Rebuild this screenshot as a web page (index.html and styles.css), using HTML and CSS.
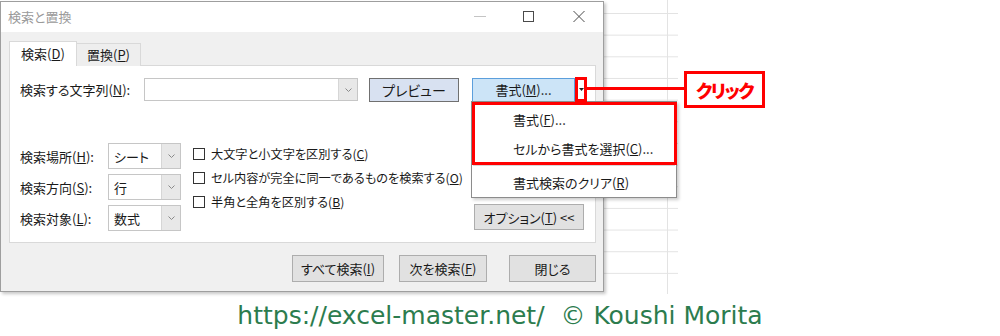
FILE: index.html
```html
<!DOCTYPE html>
<html lang="ja">
<head>
    <meta charset="UTF-8">
    <title>検索と置換</title>
    <link rel="stylesheet" href="styles.css">
</head>
<body>
    <div class="sheet">
        <!-- ダイアログ本体 -->
        <div class="dialog">
            <div class="titlebar">
                <span class="title">検索と置換</span>
                <div class="win-controls">
                    <svg class="win-min" width="12" height="11" viewBox="0 0 12 11"><line x1="0" y1="5.5" x2="12" y2="5.5" stroke="#c4c4c4" stroke-width="1"/></svg>
                    <svg class="win-max" width="12" height="11" viewBox="0 0 12 11"><rect x="0.5" y="0.5" width="10" height="10" fill="none" stroke="#4a4a4a" stroke-width="1"/></svg>
                    <svg class="win-close" width="12" height="11" viewBox="0 0 12 11"><path d="M0.5 0 L11.5 11 M11.5 0 L0.5 11" stroke="#4a4a4a" stroke-width="1"/></svg>
                </div>
            </div>
            <div class="dialog-body">
                <div class="tabs">
                    <div class="tab active">検索(<u>D</u>)</div>
                    <div class="tab">置換(<u>P</u>)</div>
                </div>
                <div class="panel">
                    <div class="find-row">
                        <label class="find-label">検索する文字列(<u>N</u>):</label>
                        <div class="combo find-combo">
                            <span class="combo-text"></span>
                            <span class="combo-arrow"><svg width="7" height="4" viewBox="0 0 7 4"><polyline points="0.5,0.5 3.5,3.5 6.5,0.5" fill="none" stroke="#8a8a8a" stroke-width="1"/></svg></span>
                        </div>
                        <button class="btn btn-preview">プレビュー</button>
                        <div class="split">
                            <button class="btn btn-format">書式(<u>M</u>)...</button>
                            <span class="split-arrow"><svg width="5" height="3" viewBox="0 0 5 3"><polygon points="0,0 5,0 2.5,3" fill="#222"/></svg></span>
                        </div>
                    </div>
                    <div class="options">
                        <div class="selects">
                            <label>検索場所(<u>H</u>):</label>
                            <div class="combo select">
                                <span class="combo-text">シート</span>
                                <span class="combo-arrow"><svg width="7" height="4" viewBox="0 0 7 4"><polyline points="0.5,0.5 3.5,3.5 6.5,0.5" fill="none" stroke="#8a8a8a" stroke-width="1"/></svg></span>
                            </div>
                            <label>検索方向(<u>S</u>):</label>
                            <div class="combo select">
                                <span class="combo-text">行</span>
                                <span class="combo-arrow"><svg width="7" height="4" viewBox="0 0 7 4"><polyline points="0.5,0.5 3.5,3.5 6.5,0.5" fill="none" stroke="#8a8a8a" stroke-width="1"/></svg></span>
                            </div>
                            <label>検索対象(<u>L</u>):</label>
                            <div class="combo select">
                                <span class="combo-text">数式</span>
                                <span class="combo-arrow"><svg width="7" height="4" viewBox="0 0 7 4"><polyline points="0.5,0.5 3.5,3.5 6.5,0.5" fill="none" stroke="#8a8a8a" stroke-width="1"/></svg></span>
                            </div>
                        </div>
                        <div class="checks">
                            <div class="check"><span class="box"></span>大文字と小文字を区別する(<u>C</u>)</div>
                            <div class="check"><span class="box"></span>セル内容が完全に同一であるものを検索する(<u>O</u>)</div>
                            <div class="check"><span class="box"></span>半角と全角を区別する(<u>B</u>)</div>
                        </div>
                        <div class="opt-col">
                            <button class="btn btn-options">オプション(<u>T</u>) &lt;&lt;</button>
                        </div>
                    </div>
                </div>
                <div class="actions">
                    <button class="btn btn-all">すべて検索(<u>I</u>)</button>
                    <button class="btn btn-next">次を検索(<u>F</u>)</button>
                    <button class="btn btn-close">閉じる</button>
                </div>
            </div>
        </div>

        <!-- 書式ボタンのドロップダウン -->
        <div class="menu">
            <div class="menu-item">書式(<u>F</u>)...</div>
            <div class="menu-item">セルから書式を選択(<u>C</u>)...</div>
            <div class="menu-sep"></div>
            <div class="menu-item">書式検索のクリア(<u>R</u>)</div>
        </div>

        <!-- 注釈 -->
        <div class="mark mark-arrow"></div>
        <div class="mark-line"></div>
        <div class="mark mark-menu"></div>
        <div class="callout">クリック</div>
    </div>
    <div class="credit">https://excel-master.net/&nbsp; © Koushi Morita</div>
</body>
</html>
```

FILE: styles.css
```css
/* 検索と置換ダイアログ */

* {
    box-sizing: border-box;
    margin: 0;
    padding: 0;
}

body {
    width: 1000px;
    height: 336px;
    overflow: hidden;
    background: #fff;
    font-family: "Noto Sans CJK JP", sans-serif;
    font-size: 13px;
    color: #1a1a1a;
    font-feature-settings: "palt";
}

u {
    text-underline-offset: 1px;
}

/* 背景のワークシート */
.sheet {
    position: relative;
    width: 678px;
    height: 294px;
    padding-top: 1px;
    background-image:
        linear-gradient(to right, transparent 667px, #e3e3e3 667px, #e3e3e3 668px, transparent 668px),
        linear-gradient(to bottom, #e3e3e3 1px, transparent 1px);
    background-size: 100% 100%, 100% 21.67px;
    background-repeat: no-repeat, repeat;
    background-position: 0 0, 0 13px;
}

.dialog {
    width: 604px;
    height: 291px;
    border: 1px solid #9e9e9e;
    background: #f0f0f0;
    box-shadow: 2px 2px 3px rgba(0, 0, 0, 0.22);
    display: flex;
    flex-direction: column;
}

.titlebar {
    height: 30px;
    background: #fff;
    display: flex;
    align-items: center;
    padding: 0 18px 1px 7px;
}

.title {
    color: #9a9a9a;
    font-size: 13px;
}

.win-controls {
    margin-left: auto;
    display: flex;
    align-items: center;
}

.win-controls svg {
    display: block;
}

.win-max {
    margin-left: 37px;
}

.win-close {
    margin-left: 38px;
}

.dialog-body {
    flex: 1;
    padding: 9px 7px 0 8px;
    display: flex;
    flex-direction: column;
}

/* タブ */
.tabs {
    display: flex;
    align-items: flex-end;
    height: 25px;
    margin-bottom: -1px;
    position: relative;
    z-index: 1;
}

.tab {
    width: 64px;
    height: 23px;
    line-height: 22px;
    text-align: center;
    border: 1px solid #d9d9d9;
    border-left: none;
    border-bottom: none;
    background: #eeeeee;
}

.tab.active {
    width: 68px;
    height: 25px;
    line-height: 24px;
    border-left: 1px solid #d9d9d9;
    background: #fff;
}

.panel {
    height: 178px;
    background: #fff;
    border: 1px solid #d9d9d9;
    padding: 12px 0 0 10px;
}

/* 検索する文字列の行 */
.find-row {
    display: flex;
    align-items: center;
    height: 23px;
}

.find-label {
    width: 124px;
}

.combo {
    display: flex;
    background: #fff;
    border: 1px solid #c6c6c6;
}

.combo-text {
    flex: 1;
    padding-left: 5px;
    display: flex;
    align-items: center;
}

.combo-arrow {
    width: 19px;
    background: #e8e8e8;
    border-left: 1px solid #d6d6d6;
    display: flex;
    align-items: center;
    justify-content: center;
}

.find-combo {
    width: 214px;
    height: 23px;
}

.btn {
    font-family: inherit;
    font-size: 13px;
    font-feature-settings: "palt";
    color: #1a1a1a;
    background: #e1e1e1;
    border: 1px solid #adadad;
    display: flex;
    align-items: center;
    justify-content: center;
    white-space: nowrap;
}

.btn-preview {
    width: 90px;
    height: 24px;
    margin-left: 11px;
    background: #d8e1f1;
    border-color: #707070;
    font-size: 14px;
}

.split {
    display: flex;
    height: 24px;
    margin-left: 13px;
}

.btn-format {
    width: 103px;
    height: 24px;
    background: #cce4f7;
    border-color: #5c9fdc;
}

.split-arrow {
    width: 12px;
    display: flex;
    align-items: center;
    justify-content: center;
    background: #fff;
}

.split-arrow svg {
    display: block;
}

/* 検索オプション */
.options {
    display: grid;
    grid-template-columns: 173px 281px 110px;
    margin-top: 42px;
}

.selects {
    display: grid;
    grid-template-columns: 88px 73px;
    grid-auto-rows: 26px;
    row-gap: 5px;
    align-items: center;
}

.select {
    height: 26px;
}

.select .combo-text {
    padding-left: 5px;
}

.checks {
    margin-top: -1px;
    font-size: 12.2px;
}

.check {
    height: 24px;
    display: flex;
    align-items: center;
    white-space: nowrap;
}

.box {
    flex: none;
    width: 12px;
    height: 12px;
    border: 1px solid #333;
    background: #fff;
    margin-right: 6px;
}

.opt-col {
    padding-top: 61px;
}

.btn-options {
    width: 110px;
    height: 26px;
}

/* 下部のボタン */
.actions {
    display: flex;
    justify-content: flex-end;
    margin-top: 12px;
}

.actions .btn {
    height: 27px;
}

.btn-all {
    width: 92px;
}

.btn-next {
    width: 88px;
    margin-left: 15px;
}

.btn-close {
    width: 87px;
    margin-left: 22px;
}

/* ドロップダウンメニュー */
.menu {
    position: absolute;
    left: 471px;
    top: 101px;
    width: 206px;
    height: 97px;
    background: #fff;
    border: 1px solid #8c8c8c;
    box-shadow: 2px 2px 3px rgba(0, 0, 0, 0.2);
    padding-top: 3px;
}

.menu-item {
    height: 29px;
    line-height: 29px;
    padding-left: 41px;
}

.menu-sep {
    height: 1px;
    background: #d7d7d7;
    margin: 2px 1px;
}

/* 赤い注釈 */
.mark {
    position: absolute;
    border: 3px solid #ff0000;
}

.mark-arrow {
    left: 575px;
    top: 77px;
    width: 12px;
    height: 25px;
}

.mark-menu {
    left: 472px;
    top: 102px;
    width: 205px;
    height: 63px;
}

.mark-line {
    position: absolute;
    left: 587px;
    top: 87px;
    width: 98px;
    height: 3px;
    background: #ff0000;
}

.callout {
    position: absolute;
    left: 684px;
    top: 71px;
    width: 81px;
    height: 37px;
    border: 3px solid #ff0000;
    background: #fff;
    color: #ff0000;
    font-weight: 900;
    font-size: 18px;
    letter-spacing: -1.5px;
    display: flex;
    align-items: center;
    justify-content: center;
}

.credit {
    margin-top: 6px;
    text-align: center;
    font-family: "DejaVu Sans", sans-serif;
    font-feature-settings: normal;
    font-size: 25px;
    line-height: 32px;
    color: #2c7c4e;
}
```
